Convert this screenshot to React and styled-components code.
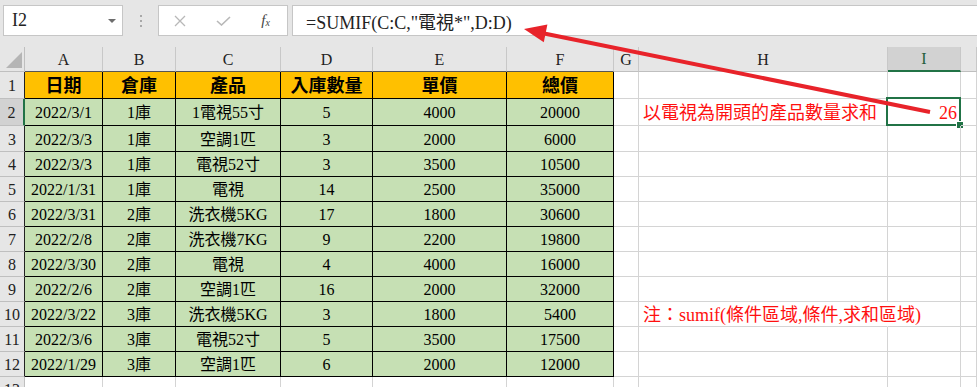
import React from 'react';
import styled, { createGlobalStyle } from 'styled-components';

const GREEN = '#217346';
const RED = '#ff1010';
const GRID = '#d4d4d4';
const FONT = '"Liberation Serif", "Noto Sans CJK TC", serif';

const Global = createGlobalStyle`
  html, body { margin: 0; padding: 0; background: #fff; overflow: hidden; }
  #root { width: 977px; height: 387px; }
`;

const Page = styled.div`
  position: relative;
  width: 977px;
  height: 387px;
  overflow: hidden;
  background: #fff;
  font-family: ${FONT};
`;

const Toolbar = styled.div`
  display: flex;
  align-items: flex-start;
  height: 47px;
  box-sizing: border-box;
  padding: 5px 0 0 3px;
  background: #e6e6e6;
`;

const NameBox = styled.div`
  box-sizing: border-box;
  width: 120px;
  height: 31px;
  background: #fff;
  border: 1px solid #c6c6c6;
  display: flex;
  align-items: center;
  justify-content: space-between;
  padding: 0 6px 0 8px;
  font-size: 18px;
  color: #222;
`;

const Dots = styled.div`
  width: 35px;
  height: 31px;
  display: flex;
  flex-direction: column;
  align-items: center;
  justify-content: center;
  gap: 3px;
  & > span {
    width: 2px;
    height: 2px;
    background: #a8a8a8;
  }
`;

const ButtonGroup = styled.div`
  box-sizing: border-box;
  width: 130px;
  height: 31px;
  background: #fff;
  border: 1px solid #c6c6c6;
  display: flex;
`;

const ToolButton = styled.div`
  width: 44px;
  height: 100%;
  display: flex;
  align-items: center;
  justify-content: center;
  color: ${p => (p.$active ? '#444' : '#b8b8b8')};
`;

const Fx = styled.span`
  font-family: ${FONT};
  font-style: italic;
  font-size: 15px;
  color: #444;
  & > sub { font-size: 10px; vertical-align: -1px; }
`;

const FormulaBar = styled.div`
  box-sizing: border-box;
  flex: 1;
  margin-left: 4px;
  margin-right: -10px;
  height: 31px;
  background: #fff;
  border: 1px solid #c6c6c6;
  display: flex;
  align-items: center;
  padding-left: 13px;
  font-size: 18px;
  color: #222;
  white-space: nowrap;
`;

const Sheet = styled.div`
  display: grid;
  grid-template-columns: 25px 78px 73px 105px 92px 134px 107px 25px 249px 73px 1fr;
  grid-template-rows: 25px 27px 27px 26px repeat(9, 25px) 25px;
`;

const Corner = styled.div`
  box-sizing: border-box;
  background: #e6e6e6;
  border-right: 1px solid #bfbfbf;
  border-bottom: 1px solid #bfbfbf;
  position: relative;
`;

const ColHead = styled.div`
  box-sizing: border-box;
  background: ${p => (p.$sel ? '#d2d2d2' : '#e6e6e6')};
  border-right: 1px solid #c8c8c8;
  border-bottom: ${p => (p.$sel ? `2px solid ${GREEN}` : p.$table ? '1px solid #555' : '1px solid #bfbfbf')};
  display: flex;
  align-items: center;
  justify-content: center;
  font-size: 16px;
  color: ${p => (p.$sel ? '#1f5f3a' : '#222')};
  padding-top: 1px;
`;

const RowHead = styled.div`
  box-sizing: border-box;
  background: ${p => (p.$sel ? '#d2d2d2' : '#e6e6e6')};
  border-right: ${p => (p.$sel ? `2px solid ${GREEN}` : p.$table ? '1px solid #222' : '1px solid #bfbfbf')};
  border-bottom: 1px solid #bfbfbf;
  display: flex;
  align-items: center;
  justify-content: center;
  font-size: 16px;
  color: #222;
  padding-top: 2px;
`;

const Cell = styled.div`
  position: relative;
  box-sizing: border-box;
  min-width: 0;
  background: ${p => p.$bg || 'transparent'};
  border-right: 1px solid ${p => (p.$table ? '#000' : p.$noRight ? 'transparent' : GRID)};
  border-bottom: 1px solid ${p => (p.$table ? '#000' : GRID)};
  display: flex;
  align-items: center;
  justify-content: ${p => (p.$align === 'left' ? 'flex-start' : p.$align === 'right' ? 'flex-end' : 'center')};
  padding: 2px ${p => (p.$align === 'right' ? '3px' : '0')} 0 ${p => (p.$align === 'left' ? '4px' : '0')};
  font-size: ${p => p.$size || 16}px;
  font-weight: ${p => (p.$bold ? 700 : 400)};
  color: ${p => p.$color || '#000'};
  white-space: nowrap;
  line-height: 1;
  overflow: visible;
`;

const Selection = styled.div`
  position: absolute;
  top: -2px;
  left: -2px;
  right: -1px;
  bottom: -1px;
  border: 2px solid ${GREEN};
  pointer-events: none;
`;

const Handle = styled.div`
  position: absolute;
  right: -5px;
  bottom: -5px;
  width: 6px;
  height: 6px;
  background: ${GREEN};
  border: 1px solid #fff;
`;

const Overlay = styled.svg`
  position: absolute;
  left: 0;
  top: 0;
  pointer-events: none;
`;

const HEAD = ['日期', '倉庫', '產品', '入庫數量', '單價', '總價'];
const DATA = [
  ['2022/3/1', '1庫', '1電視55寸', '5', '4000', '20000'],
  ['2022/3/3', '1庫', '空調1匹', '3', '2000', '6000'],
  ['2022/3/3', '1庫', '電視52寸', '3', '3500', '10500'],
  ['2022/1/31', '1庫', '電視', '14', '2500', '35000'],
  ['2022/3/31', '2庫', '洗衣機5KG', '17', '1800', '30600'],
  ['2022/2/8', '2庫', '洗衣機7KG', '9', '2200', '19800'],
  ['2022/3/30', '2庫', '電視', '4', '4000', '16000'],
  ['2022/2/6', '2庫', '空調1匹', '16', '2000', '32000'],
  ['2022/3/22', '3庫', '洗衣機5KG', '3', '1800', '5400'],
  ['2022/3/6', '3庫', '電視52寸', '5', '3500', '17500'],
  ['2022/1/29', '3庫', '空調1匹', '6', '2000', '12000'],
];
const LETTERS = ['A', 'B', 'C', 'D', 'E', 'F', 'G', 'H', 'I', ''];

function Tail({ row }) {
  const h = row === 2 ? '以電視為開頭的產品數量求和' : row === 10 ? '注：sumif(條件區域,條件,求和區域)' : '';
  return (
    <>
      <Cell />
      <Cell $align="left" $color={RED} $size={18} $noRight={row === 10}>{h}</Cell>
      <Cell $align="right" $color={RED} $size={18}>
        {row === 2 && '26'}
        {row === 2 && (
          <Selection>
            <Handle />
          </Selection>
        )}
      </Cell>
      <Cell />
    </>
  );
}

export default function App() {
  return (
    <Page>
      <Global />
      <Toolbar>
        <NameBox>
          <span>I2</span>
          <svg width="8" height="4" viewBox="0 0 8 4"><polygon points="0,0 8,0 4,4" fill="#6d6d6d" /></svg>
        </NameBox>
        <Dots><span /><span /><span /></Dots>
        <ButtonGroup>
          <ToolButton>
            <svg width="12" height="12" viewBox="0 0 12 12"><path d="M1 1 L11 11 M11 1 L1 11" stroke="currentColor" strokeWidth="1.3" fill="none" /></svg>
          </ToolButton>
          <ToolButton>
            <svg width="15" height="10" viewBox="0 0 15 10"><path d="M1 5 L5.5 9 L14 1" stroke="currentColor" strokeWidth="1.6" fill="none" /></svg>
          </ToolButton>
          <ToolButton $active>
            <Fx>f<sub>x</sub></Fx>
          </ToolButton>
        </ButtonGroup>
        <FormulaBar>=SUMIF(C:C,"電視*",D:D)</FormulaBar>
      </Toolbar>
      <Sheet>
        <Corner>
          <svg width="25" height="25" viewBox="0 0 25 25" style={{ position: 'absolute', left: 0, top: 0 }}>
            <polygon points="22,5 22,21 6,21" fill="#b5b5b5" />
          </svg>
        </Corner>
        {LETTERS.map((l, i) => (
          <ColHead key={i} $sel={l === 'I'} $table={i < 6}>{l}</ColHead>
        ))}
        <RowHead $table>1</RowHead>
        {HEAD.map((t, i) => (
          <Cell key={i} $table $bg="#ffc000" $bold $size={18}>{t}</Cell>
        ))}
        <Tail row={1} />
        {DATA.map((r, ri) => (
          <React.Fragment key={ri}>
            <RowHead $table $sel={ri === 0}>{ri + 2}</RowHead>
            {r.map((v, ci) => (
              <Cell key={ci} $table $bg="#c6e0b4">{v}</Cell>
            ))}
            <Tail row={ri + 2} />
          </React.Fragment>
        ))}
        <RowHead>13</RowHead>
        {Array.from({ length: 10 }).map((_, i) => (
          <Cell key={i} />
        ))}
      </Sheet>
      <Overlay width="977" height="387" viewBox="0 0 977 387">
        <line x1="930" y1="112" x2="543" y2="33.3" stroke="#e8232a" strokeWidth="4" />
        <polygon points="524,29 543.8,42.2 547.4,24.6" fill="#e8232a" />
      </Overlay>
    </Page>
  );
}
